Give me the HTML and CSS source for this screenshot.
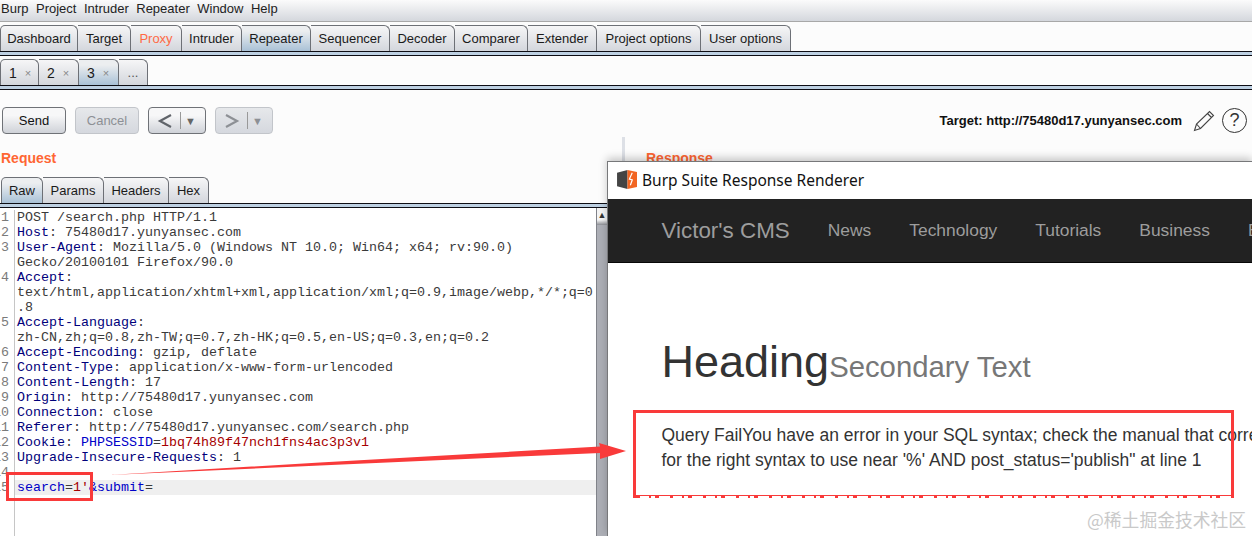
FILE: index.html
```html
<!DOCTYPE html>
<html lang="en">
<head>
<meta charset="utf-8">
<title>Burp Suite Repeater</title>
<link rel="stylesheet" href="styles.css">
</head>
<body>
<div class="app">
  <nav class="menubar">
    <span>Burp</span><span>Project</span><span>Intruder</span><span>Repeater</span><span>Window</span><span>Help</span>
  </nav>

  <div class="tabs main-tabs">
    <div class="tab w78">Dashboard</div>
    <div class="tab w53">Target</div>
    <div class="tab w51 proxy">Proxy</div>
    <div class="tab w60">Intruder</div>
    <div class="tab w69 active">Repeater</div>
    <div class="tab w79">Sequencer</div>
    <div class="tab w65">Decoder</div>
    <div class="tab w73">Comparer</div>
    <div class="tab w69">Extender</div>
    <div class="tab w104">Project options</div>
    <div class="tab w90">User options</div>
  </div>
  <div class="tabline"></div>

  <div class="tabs sub-tabs">
    <div class="tab w39 num">1<i>×</i></div>
    <div class="tab w40 num">2<i>×</i></div>
    <div class="tab w40 num active">3<i>×</i></div>
    <div class="tab w29 dots">...</div>
  </div>
  <div class="tabline"></div>

  <div class="toolbar">
    <button class="btn send">Send</button>
    <button class="btn cancel dis">Cancel</button>
    <button class="btn hist">
      <svg class="chev" viewBox="0 0 16 16"><path d="M14 2 3 8l11 6" /></svg><b class="sep"></b><span class="tri">▼</span>
    </button>
    <button class="btn hist dis">
      <svg class="chev" viewBox="0 0 16 16"><path d="M2 2l11 6-11 6" /></svg><b class="sep"></b><span class="tri">▼</span>
    </button>
    <div class="target">Target: http://75480d17.yunyansec.com</div>
    <svg class="pencil" viewBox="0 0 22 22"><path d="M1.500 20.500 3.500 14 16.500 1.500 20.500 5.500 7.500 18.500ZM3.500 14 7.500 18.500M14.500 3.500 18.500 7.500" /></svg>
    <div class="help">?</div>
  </div>

  <div class="split">
    <section class="left">
      <h2 class="title">Request</h2>
      <div class="tabs edit-tabs">
        <div class="tab w42 active">Raw</div>
        <div class="tab w61">Params</div>
        <div class="tab w65">Headers</div>
        <div class="tab w40">Hex</div>
      </div>
      <div class="tabline"></div>
      <div class="editor">
        <div class="code">
          <div class="l"><em>1</em><code>POST /search.php HTTP/1.1</code></div>
          <div class="l"><em>2</em><code><span class="h">Host</span>: 75480d17.yunyansec.com</code></div>
          <div class="l"><em>3</em><code><span class="h">User-Agent</span>: Mozilla/5.0 (Windows NT 10.0; Win64; x64; rv:90.0)</code></div>
          <div class="l"><em></em><code>Gecko/20100101 Firefox/90.0</code></div>
          <div class="l"><em>4</em><code><span class="h">Accept</span>:</code></div>
          <div class="l"><em></em><code>text/html,application/xhtml+xml,application/xml;q=0.9,image/webp,*/*;q=0</code></div>
          <div class="l"><em></em><code>.8</code></div>
          <div class="l"><em>5</em><code><span class="h">Accept-Language</span>:</code></div>
          <div class="l"><em></em><code>zh-CN,zh;q=0.8,zh-TW;q=0.7,zh-HK;q=0.5,en-US;q=0.3,en;q=0.2</code></div>
          <div class="l"><em>6</em><code><span class="h">Accept-Encoding</span>: gzip, deflate</code></div>
          <div class="l"><em>7</em><code><span class="h">Content-Type</span>: application/x-www-form-urlencoded</code></div>
          <div class="l"><em>8</em><code><span class="h">Content-Length</span>: 17</code></div>
          <div class="l"><em>9</em><code><span class="h">Origin</span>: http://75480d17.yunyansec.com</code></div>
          <div class="l"><em>10</em><code><span class="h">Connection</span>: close</code></div>
          <div class="l"><em>11</em><code><span class="h">Referer</span>: http://75480d17.yunyansec.com/search.php</code></div>
          <div class="l"><em>12</em><code><span class="h">Cookie</span>: <span class="k">PHPSESSID</span>=<span class="r">1bq74h89f47nch1fns4ac3p3v1</span></code></div>
          <div class="l"><em>13</em><code><span class="h">Upgrade-Insecure-Requests</span>: 1</code></div>
          <div class="l"><em>14</em><code></code></div>
          <div class="l cur"><em>15</em><code><span class="k">search</span>=<span class="r">1'</span><span class="k">&amp;submit</span>=</code></div>
          <div class="rest"></div>
        </div>
        <div class="scrollbar"><div class="arrow">▲</div></div>
      </div>
    </section>
    <div class="divider"></div>
    <section class="right">
      <h2 class="title">Response</h2>
    </section>
  </div>
</div>

<div class="renderer">
  <header class="win-title">
    <svg class="burp" viewBox="0 0 22 20">
      <path class="burp-d" d="M0 3 11 0V20L0 17Z"/>
      <path class="burp-o" d="M11 0 21 2V18L11 20Z"/>
      <path class="burp-w" d="M16 3 13 9.500 16 10.500 14 16"/>
    </svg>
    <span>Burp Suite Response Renderer</span>
  </header>
  <div class="navbar">
    <span class="brand">Victor's CMS</span>
    <span>News</span><span>Technology</span><span>Tutorials</span><span>Business</span><span>Education</span>
  </div>
  <div class="content">
    <h1>Heading<small>Secondary Text</small></h1>
    <p>Query FailYou have an error in your SQL syntax; check the manual that corresponds to your MySQL server version<br>for the right syntax to use near '%' AND post_status='publish" at line 1</p>
  </div>
</div>

<div class="mark box-a"></div>
<div class="mark box-b"></div>
<div class="noise"></div>
<svg class="arrow-mark" viewBox="0 0 1252 536"><path d="M109 475 320 462.500 600 446.500 599 443 626 451 600 459 600 453 320 465.500Z"/></svg>
<div class="watermark">@稀土掘金技术社区</div>
</body>
</html>
```
FILE: styles.css
```css
* { box-sizing: border-box; }
html, body { margin: 0; height: 536px; overflow: hidden; }
body { position: relative; background: #fcfcfc; font: 13px "Liberation Sans", Arial, sans-serif; color: #111; }

.app { height: 536px; display: flex; flex-direction: column; }

.menubar { height: 22px; flex: none; padding: 0 0 5px 1px; display: flex; gap: 7.5px; align-items: center; font-size: 13px; color: #222;
  background: linear-gradient(#fbfbfb, #d4d7dd); border-bottom: 1px solid #a8a8a8; }

.tabs { display: flex; align-items: flex-end; flex: none; }
.main-tabs { height: 29px; }
.sub-tabs { height: 29px; }
.tab { height: 26px; flex: none; display: flex; align-items: center; justify-content: center; font-size: 13px; color: #1a1a1a;
  border: 1px solid #6d7076; border-bottom: 0; border-left-width: 0; border-radius: 0 6px 0 0;
  background: linear-gradient(#f6f6f7, #d3d6dc); }
.tab:first-child { border-left-width: 1px; border-radius: 5px 6px 0 0; }
.tab.active { background: linear-gradient(#eceef0 20%, #a9c1d6); }
.tab.proxy { color: #ff6a45; }
.w78 { width: 78px; } .w53 { width: 53px; } .w51 { width: 51px; } .w60 { width: 60px; } .w69 { width: 69px; }
.w79 { width: 79px; } .w65 { width: 65px; } .w73 { width: 73px; } .w104 { width: 104px; } .w90 { width: 90px; }
.w39 { width: 39px; } .w40 { width: 40px; } .w29 { width: 29px; } .w42 { width: 42px; } .w61 { width: 61px; }
.num { justify-content: flex-start; padding-left: 8px; font-size: 14px; }
.num i { font-style: normal; font-size: 11px; color: #888; margin-left: 8px; }
.dots { color: #555; }

.tabline { height: 5px; flex: none; background: #bdd0e2; border-top: 1px solid #0d0d14; border-bottom: 1px solid #0d0d14; }

.toolbar { height: 47px; flex: none; display: flex; align-items: center; padding: 14px 5px 0 2px; }
.btn { height: 27px; width: 64px; padding: 0; margin-right: 9px; display: flex; align-items: center; justify-content: center;
  font: 13px "Liberation Sans", Arial, sans-serif; color: #111; border: 1px solid #6f7277; border-radius: 4px;
  background: linear-gradient(#f7f7f8 30%, #cfd2d8); }
.btn.dis { color: #8d9095; border-color: #c2c5ca; background: linear-gradient(#e6e8eb, #d5d8de); }
.hist { width: 58px; }
.chev { width: 16px; height: 16px; fill: none; stroke: #60646a; stroke-width: 2.2; margin-left: -1px; }
.dis .chev { stroke: #8d9095; }
.sep { width: 1px; height: 17px; background: #999; margin: 0 4px 0 7px; }
.tri { font-size: 11px; color: #666; }
.dis .tri { color: #8d9095; }
.target { margin-left: auto; font-size: 13px; font-weight: bold; color: #111; margin-right: 11px; }
.pencil { width: 22px; height: 22px; fill: none; stroke: #444; stroke-width: 1.1; margin-right: 7px; }
.help { width: 25px; height: 25px; border: 1.5px solid #333; border-radius: 50%; display: flex; align-items: center; justify-content: center;
  font-size: 18px; color: #333; }

.split { flex: 1; min-height: 0; display: flex; }
.left { width: 607px; flex: none; display: flex; flex-direction: column; }
.title { margin: 0; height: 40px; padding: 12px 0 0 1px; font-size: 14px; line-height: 18px; font-weight: bold; color: #ff6633; }
.edit-tabs { height: 26px; padding-left: 1px; }

.editor { flex: 1; min-height: 0; display: flex; background: #fff; }
.code { flex: 1; display: flex; flex-direction: column; padding-top: 2px; font-family: "Liberation Mono", "Courier New", monospace; font-size: 13.33px; line-height: 15px; color: #3a3a3a; }
.l { display: flex; flex: none; height: 15px; white-space: pre; }
.l em { width: 15px; flex: none; display: flex; justify-content: flex-end; padding-right: 5px; font-style: normal; color: #7a7a7a; border-right: 1px solid #c6c6c6; height: 15px; }
.l code { font: inherit; padding-left: 2px; flex: 1; }
.rest { flex: 1; margin-left: 14px; border-left: 1px solid #c6c6c6; }
.h { color: #00007a; }
.k { color: #0000c8; }
.r { color: #a60000; }
.cur code { background: #efefef; }
.scrollbar { width: 11px; flex: none; background: #adafb6; border-left: 1px solid #808289; }
.arrow { height: 17px; font-size: 9px; line-height: 15px; text-align: center; color: #333; background: linear-gradient(#f4f4f4 70%, #8c8e94); }

.divider { width: 3px; flex: none; height: 70px; margin: 0 0 0 15px; background: #dde0e6; }
.right { flex: 1; padding-left: 20px; }

.renderer { position: absolute; left: 607px; top: 161px; width: 645px; height: 375px; background: #fff; border: 1px solid #77787a; border-width: 1px 0 0 1px;
  box-shadow: 0 -3px 8px rgba(0,0,0,.22); }
.win-title { height: 37px; display: flex; align-items: center; padding: 0 0 2px 9px; gap: 4px; font: 15.5px "Noto Sans", "Open Sans", sans-serif; color: #111; }
.burp { width: 21px; height: 19px; }
.burp-d { fill: #444; }
.burp-o { fill: #f26522; }
.burp-w { fill: none; stroke: #fff; stroke-width: 1.3; }
.navbar { height: 64px; background: #222; border-bottom: 1px solid #080808; display: flex; align-items: center; gap: 38px; padding-left: 53.500px; font-size: 17.4px; color: #9d9d9d; white-space: nowrap; overflow: hidden; }
.brand { font-size: 22.4px; color: #9d9d9d; }
.content { padding: 0 0 0 53.500px; white-space: nowrap; overflow: hidden; color: #333; }
.content h1 { margin: 0; padding-top: 72px; font-size: 45px; line-height: 54px; font-weight: 400; color: #333; }
.content small { font-size: 29.3px; color: #777; }
.content p { margin: 29px 0 0; font-size: 17.5px; line-height: 25px; }

.mark { position: absolute; border: 3px solid #f93a3a; }
.box-a { left: 6px; top: 472px; width: 87px; height: 29px; }
.box-b { left: 633px; top: 410px; width: 601px; height: 88px; }
.noise { position: absolute; left: 640px; top: 496px; width: 591px; height: 2px;
  background: repeating-linear-gradient(90deg, #fff 0 9px, transparent 9px 11px, #fff 11px 15px, transparent 15px 19px, #fff 19px 30px, transparent 30px 33px); }
.arrow-mark { position: absolute; left: 0; top: 0; width: 1252px; height: 536px; pointer-events: none; }
.arrow-mark path { fill: #f93a3a; }
.watermark { position: absolute; left: 1087px; top: 508px; font: 17.8px "Noto Sans CJK SC", "Noto Sans", sans-serif; line-height: 22px; color: #c9c9c9; white-space: nowrap; }
```
